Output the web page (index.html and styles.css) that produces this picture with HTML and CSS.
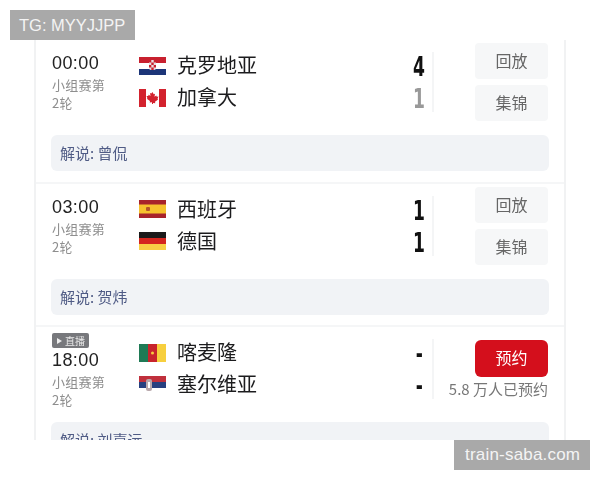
FILE: index.html
```html
<!DOCTYPE html>
<html lang="zh-CN">
<head>
  <meta charset="UTF-8">
  <meta name="viewport" content="width=device-width, initial-scale=1.0">
  <title>赛程</title>
  <link rel="stylesheet" href="styles.css">
</head>
<body>
  <div class="mark mark-top">TG: MYYJJPP</div>

  <div class="list">
    <div class="match">
      <div class="main">
        <div class="info">
          <div class="time">00:00</div>
          <div class="stage">小组赛第<br>2轮</div>
        </div>
        <div class="teams">
          <div class="team">
            <svg class="flag" viewBox="0 0 27 18">
              <rect width="27" height="6" fill="#c8202f"/>
              <rect y="6" width="27" height="6" fill="#fff"/>
              <rect y="12" width="27" height="6" fill="#1c3578"/>
              <rect x="10" y="3" width="7" height="10" rx="2" fill="#e8e0e4"/>
              <path d="M10 3h2.300v2.500H10zM14.700 3H17v2.500h-2.300zM12.300 5.500h2.400V8h-2.400zM10 8h2.300v2.500H10zM14.700 8H17v2.500h-2.300zM12.300 10.500h2.400V13h-2.400z" fill="#c8202f"/>
            </svg>
            <span class="name">克罗地亚</span>
          </div>
          <div class="team">
            <svg class="flag" viewBox="0 0 27 18">
              <rect width="27" height="18" fill="#fff"/>
              <rect width="7" height="18" fill="#d3222e"/>
              <rect x="20" width="7" height="18" fill="#d3222e"/>
              <path d="M13.500 3l1.200 2.300 1.300-.6-.5 3 1.800-1.200.5 1.300 1.700-.2-1 2.400.7.500-3.200 2.300.3 1.400-2.300-.3V15h-1v-1.800l-2.300.3.300-1.400-3.200-2.300.7-.5-1-2.400 1.700.2.500-1.300 1.800 1.200-.5-3 1.300.6z" fill="#d3222e"/>
            </svg>
            <span class="name">加拿大</span>
          </div>
        </div>
        <div class="scores">
          <span class="score">4</span>
          <span class="score lose">1</span>
        </div>
        <div class="actions">
          <div class="btn">回放</div>
          <div class="btn">集锦</div>
        </div>
      </div>
      <div class="host">解说: 曾侃</div>
    </div>

    <div class="match">
      <div class="main">
        <div class="info">
          <div class="time">03:00</div>
          <div class="stage">小组赛第<br>2轮</div>
        </div>
        <div class="teams">
          <div class="team">
            <svg class="flag" viewBox="0 0 27 18">
              <rect width="27" height="18" fill="#a8232b"/>
              <rect y="4.500" width="27" height="9" fill="#f6c12e"/>
              <rect x="7" y="7" width="4" height="4" rx="1" fill="#b5552a"/>
            </svg>
            <span class="name">西班牙</span>
          </div>
          <div class="team">
            <svg class="flag" viewBox="0 0 27 18">
              <rect width="27" height="6" fill="#1a1a1a"/>
              <rect y="6" width="27" height="6" fill="#d4261f"/>
              <rect y="12" width="27" height="6" fill="#f8cf45"/>
            </svg>
            <span class="name">德国</span>
          </div>
        </div>
        <div class="scores">
          <span class="score">1</span>
          <span class="score">1</span>
        </div>
        <div class="actions">
          <div class="btn">回放</div>
          <div class="btn">集锦</div>
        </div>
      </div>
      <div class="host">解说: 贺炜</div>
    </div>

    <div class="match">
      <div class="main">
        <div class="info">
          <div class="live"><span class="play"></span>直播</div>
          <div class="time">18:00</div>
          <div class="stage">小组赛第<br>2轮</div>
        </div>
        <div class="teams">
          <div class="team">
            <svg class="flag" viewBox="0 0 27 18">
              <rect width="9" height="18" fill="#1f7a55"/>
              <rect x="9" width="9" height="18" fill="#c8242c"/>
              <rect x="18" width="9" height="18" fill="#f7cf3e"/>
              <circle cx="13.500" cy="9" r="1.500" fill="#f7cf3e"/>
            </svg>
            <span class="name">喀麦隆</span>
          </div>
          <div class="team">
            <svg class="flag" viewBox="0 0 27 18">
              <rect width="27" height="6" fill="#c0303c"/>
              <rect y="6" width="27" height="6" fill="#27407f"/>
              <rect y="12" width="27" height="6" fill="#fff"/>
              <rect x="7" y="3" width="6" height="12" rx="2" fill="#b9a8ac"/>
              <rect x="9" y="6" width="2" height="6" fill="#fff"/>
            </svg>
            <span class="name">塞尔维亚</span>
          </div>
        </div>
        <div class="scores">
          <span class="score">-</span>
          <span class="score">-</span>
        </div>
        <div class="actions">
          <div class="btn btn-red">预约</div>
          <div class="count">5.8 万人已预约</div>
        </div>
      </div>
      <div class="host">解说: 刘嘉远</div>
    </div>
  </div>

  <div class="mark mark-bottom">train-saba.com</div>
</body>
</html>
```

FILE: styles.css
```css
html, body {
  margin: 0;
  background: #fff;
}
body {
  position: relative;
  height: 480px;
  overflow: hidden;
  font-family: "Noto Sans CJK SC", "Liberation Sans", sans-serif;
  color: #1c1c1e;
}
.mark {
  position: absolute;
  z-index: 2;
  box-sizing: border-box;
  background: #a9a9a9;
  color: #f4f4f4;
  font-family: "Liberation Sans", sans-serif;
}
.mark-top {
  left: 10px;
  top: 10px;
  width: 125px;
  height: 30px;
  line-height: 30px;
  padding-left: 9px;
  font-size: 16.500px;
}
.mark-bottom {
  left: 454px;
  top: 440px;
  width: 136px;
  height: 30px;
  line-height: 30px;
  padding-left: 11px;
  font-size: 17px;
  letter-spacing: 0.2px;
}
.list {
  box-sizing: border-box;
  width: 532px;
  height: 400px;
  margin: 40px 0 0 34px;
  border-left: 2px solid #f1f2f3;
  border-right: 2px solid #f1f2f3;
  overflow: hidden;
  filter: blur(0.5px);
}
.match {
  box-sizing: border-box;
  height: 143.500px;
  padding: 3px 16px 0 16px;
  border-bottom: 2px solid #f5f6f7;
}
.main {
  display: flex;
  height: 92px;
}
.info {
  width: 87px;
  margin-top: 8px;
}
.time {
  font-family: "Liberation Sans", sans-serif;
  font-size: 18px;
  line-height: 24px;
  letter-spacing: 0.4px;
  color: #222;
}
.stage {
  font-size: 13px;
  line-height: 18px;
  letter-spacing: 0.25px;
  margin-top: 1px;
  color: #8e8e8e;
}
.live {
  display: flex;
  align-items: center;
  gap: 3px;
  width: 37px;
  height: 15px;
  margin-top: -5px;
  border-radius: 2px;
  background: #77787c;
  color: #e8e8e8;
  font-size: 10px;
  line-height: 15px;
}
.play {
  width: 0;
  height: 0;
  margin-left: 5px;
  border-left: 5px solid #eee;
  border-top: 3px solid transparent;
  border-bottom: 3px solid transparent;
}
.teams {
  display: flex;
  flex-direction: column;
  gap: 13px;
  width: 272px;
  margin-top: 13px;
}
.team {
  display: flex;
  align-items: center;
  gap: 11px;
  height: 19px;
}
.flag {
  display: block;
  width: 27px;
  height: 18px;
}
.name {
  font-size: 20px;
  line-height: 19px;
  margin-top: -2px;
  color: #1c1c1e;
}
.scores {
  display: flex;
  flex-direction: column;
  align-items: center;
  gap: 12px;
  box-sizing: border-box;
  width: 23px;
  height: 60px;
  margin-top: 9px;
  padding: 5px 5px 0 0;
  border-right: 2px solid #f4f5f6;
}
.score {
  font-family: "DejaVu Sans", sans-serif;
  font-weight: bold;
  font-size: 26px;
  line-height: 20px;
  height: 20px;
  transform: scaleX(0.66);
  color: #111;
}
.lose {
  color: #999;
}
.actions {
  display: flex;
  flex-direction: column;
  align-items: flex-end;
  gap: 6px;
  flex: 1;
}
.btn {
  width: 73px;
  height: 36px;
  line-height: 35px;
  text-align: center;
  border-radius: 4px;
  background: #f6f7f8;
  color: #666;
  font-size: 16px;
}
.btn-red {
  height: 37px;
  margin-top: 10px;
  border-radius: 6px;
  background: #d40f1c;
  color: #fff;
}
.count {
  margin-top: -4px;
  font-size: 15px;
  line-height: 20px;
  color: #777;
  white-space: nowrap;
}
.host {
  box-sizing: border-box;
  height: 36px;
  line-height: 36px;
  margin: 0 -1px;
  padding-left: 9px;
  border-radius: 6px;
  background: #f1f3f6;
  color: #4f5b85;
  font-size: 15px;
}
```
